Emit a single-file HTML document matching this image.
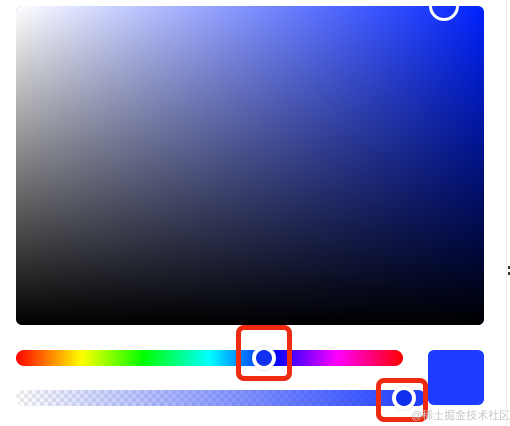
<!DOCTYPE html>
<html><head><meta charset="utf-8"><style>
html,body{margin:0;padding:0;background:#fff;width:510px;height:426px;overflow:hidden;position:relative;font-family:"Liberation Sans","Noto Sans CJK SC",sans-serif}
.abs{position:absolute}
#sv{left:16px;top:6px;width:468px;height:319px;border-radius:6px;overflow:hidden;background:#0022ff}
#sv .w{position:absolute;inset:0;background:linear-gradient(to right,#fff,rgba(255,255,255,0))}
#sv .b{position:absolute;inset:0;background:linear-gradient(to bottom,rgba(0,0,0,0),#000)}
#hue{left:16px;top:350px;width:387px;height:16px;border-radius:8px;background:linear-gradient(to right,#f00,#ff0 17%,#0f0 33%,#0ff 50%,#00f 67%,#f0f 83%,#f00)}
#alpha{left:16px;top:390px;width:410px;height:16px;border-radius:8px;overflow:hidden;background-color:#fff;background-image:linear-gradient(45deg,#e8e8e8 25%,transparent 25%,transparent 75%,#e8e8e8 75%),linear-gradient(45deg,#e8e8e8 25%,transparent 25%,transparent 75%,#e8e8e8 75%);background-size:8px 8px;background-position:0 0,4px 4px}
#alpha .g{position:absolute;inset:0;background:linear-gradient(to right,rgba(29,60,255,0),#1d3cff)}
.thumb{width:16px;height:16px;border-radius:50%;background:#1030ee;border:4px solid #fff;box-shadow:0 0 2px rgba(0,0,0,.2)}
.box{border:5px solid #ee2a10;border-radius:8px;box-sizing:border-box}
#sw{left:428px;top:350px;width:56px;height:55px;border-radius:6px;background:#1d3cff}
</style></head><body>
<div id="sv" class="abs"><div class="w"></div><div class="b"></div></div>
<div class="abs" style="left:429px;top:-9px;width:24px;height:24px;border:3px solid #fff;border-radius:50%"></div>
<div id="hue" class="abs"></div>
<div class="abs thumb" style="left:252px;top:346px"></div>
<div class="abs box" style="left:236px;top:325px;width:56px;height:56px"></div>
<div id="alpha" class="abs"><div class="g"></div></div>
<div id="sw" class="abs"></div>
<div class="abs thumb" style="left:392px;top:386px"></div>
<div class="abs box" style="left:376px;top:378px;width:52px;height:44px"></div>
<div class="abs" style="left:411px;top:407px;font-size:11px;color:#c8c8c8;white-space:nowrap">@稀土掘金技术社区</div>
<div class="abs" style="left:506px;top:0;width:1px;height:426px;background:#eee"></div>
<div class="abs" style="left:508px;top:266px;width:2px;height:3px;background:#333"></div>
<div class="abs" style="left:508px;top:272px;width:2px;height:3px;background:#333"></div>
</body></html>
